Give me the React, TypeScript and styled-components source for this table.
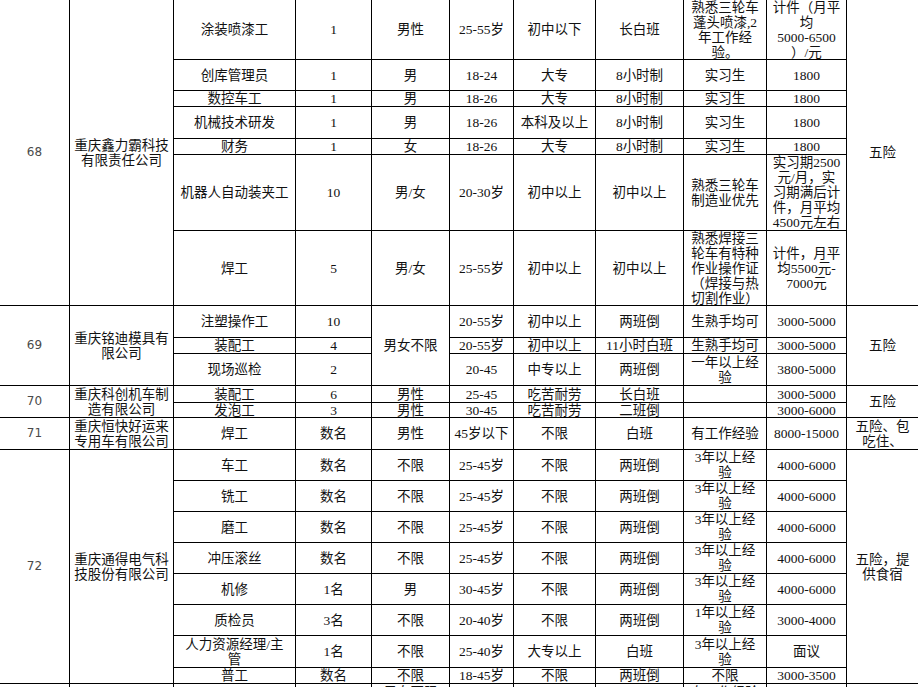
import styled, { createGlobalStyle } from 'styled-components'

const GlobalStyle = createGlobalStyle`
  html, body {
    margin: 0;
    padding: 0;
    background: #fff;
  }
  body {
    width: 918px;
    height: 687px;
    overflow: hidden;
  }
`

const Sheet = styled.div`
  display: grid;
  grid-template-columns: 69px 103px 121px 75px 77px 63px 81px 87px 82px 79px 71px;
  grid-template-rows:
    59px 30px 15px 31px 15px 75px 74px
    31px 15px 31px
    16px 14px
    31px
    30px 30px 30px 30px 30px 30px 31px 15px
    40px;
  gap: 1px;
  background: #000;
  width: 918px;
  font-family: "Liberation Serif", "Noto Sans CJK SC", serif;
  font-size: 13.5px;
  line-height: 15px;
  color: #111;
`

const Cell = styled.div<{ $r: number; $c: number; $rs?: number; $top?: boolean }>`
  grid-row: ${p => p.$r} / span ${p => p.$rs ?? 1};
  grid-column: ${p => p.$c};
  background: #fff;
  display: flex;
  align-items: ${p => (p.$top ? 'flex-start' : 'center')};
  justify-content: center;
  padding-top: ${p => (p.$top ? '1px' : '0')};
  text-align: center;
  white-space: nowrap;
  overflow: hidden;
`

const NumCell = styled(Cell)`
  font-family: "DejaVu Sans", "Liberation Sans", sans-serif;
  font-size: 12px;
  color: #4a4a4a;
`

type Company = {
  no: string
  name: string
  row: number
  span: number
  benefit: string
}

const companies: Company[] = [
  { no: '68', name: '重庆鑫力霸科技|有限责任公司', row: 1, span: 7, benefit: '五险' },
  { no: '69', name: '重庆铭迪模具有|限公司', row: 8, span: 3, benefit: '五险' },
  { no: '70', name: '重庆科创机车制|造有限公司', row: 11, span: 2, benefit: '五险' },
  { no: '71', name: '重庆恒快好运来|专用车有限公司', row: 13, span: 1, benefit: '五险、包|吃住、' },
  { no: '72', name: '重庆通得电气科|技股份有限公司', row: 14, span: 8, benefit: '五险，提|供食宿' },
]

// job columns 3..10, null = covered by a merged cell above
const jobs: (string | null)[][] = [
  ['涂装喷漆工', '1', '男性', '25-55岁', '初中以下', '长白班', '熟悉三轮车|蓬头喷漆,2|年工作经|验。', '计件（月平|均|5000-6500|）/元'],
  ['创库管理员', '1', '男', '18-24', '大专', '8小时制', '实习生', '1800'],
  ['数控车工', '1', '男', '18-26', '大专', '8小时制', '实习生', '1800'],
  ['机械技术研发', '1', '男', '18-26', '本科及以上', '8小时制', '实习生', '1800'],
  ['财务', '1', '女', '18-26', '大专', '8小时制', '实习生', '1800'],
  ['机器人自动装夹工', '10', '男/女', '20-30岁', '初中以上', '初中以上', '熟悉三轮车|制造业优先', '实习期2500|元/月，实|习期满后计|件，月平均|4500元左右'],
  ['焊工', '5', '男/女', '25-55岁', '初中以上', '初中以上', '熟悉焊接三|轮车有特种|作业操作证|（焊接与热|切割作业）', '计件，月平|均5500元-|7000元'],
  ['注塑操作工', '10', '男女不限', '20-55岁', '初中以上', '两班倒', '生熟手均可', '3000-5000'],
  ['装配工', '4', null, '20-55岁', '初中以上', '11小时白班', '生熟手均可', '3000-5000'],
  ['现场巡检', '2', null, '20-45', '中专以上', '两班倒', '一年以上经|验', '3800-5000'],
  ['装配工', '6', '男性', '25-45', '吃苦耐劳', '长白班', '', '3000-5000'],
  ['发泡工', '3', '男性', '30-45', '吃苦耐劳', '二班倒', '', '3000-6000'],
  ['焊工', '数名', '男性', '45岁以下', '不限', '白班', '有工作经验', '8000-15000'],
  ['车工', '数名', '不限', '25-45岁', '不限', '两班倒', '3年以上经|验', '4000-6000'],
  ['铣工', '数名', '不限', '25-45岁', '不限', '两班倒', '3年以上经|验', '4000-6000'],
  ['磨工', '数名', '不限', '25-45岁', '不限', '两班倒', '3年以上经|验', '4000-6000'],
  ['冲压滚丝', '数名', '不限', '25-45岁', '不限', '两班倒', '3年以上经|验', '4000-6000'],
  ['机修', '1名', '男', '30-45岁', '不限', '两班倒', '3年以上经|验', '4000-6000'],
  ['质检员', '3名', '不限', '20-40岁', '不限', '两班倒', '1年以上经|验', '3000-4000'],
  ['人力资源经理/主|管', '1名', '不限', '25-40岁', '大专以上', '白班', '3年以上经|验', '面议'],
  ['普工', '数名', '不限', '18-45岁', '不限', '两班倒', '不限', '3000-3500'],
]

// the cut-off row at the bottom edge
const lastRow = ['', '', '', '', '男女不限', '', '', '', '有工作经验', '', '']

function Lines({ text }: { text: string }) {
  const parts = text.split('|')
  return (
    <div>
      {parts.map((p, i) => (
        <div key={i}>{p || '\u00a0'}</div>
      ))}
    </div>
  )
}

export default function App() {
  return (
    <>
      <GlobalStyle />
      <Sheet>
        {companies.map(co => (
          <>
            <NumCell key={co.no + 'n'} $r={co.row} $c={1} $rs={co.span}>{co.no}</NumCell>
            <Cell key={co.no + 'c'} $r={co.row} $c={2} $rs={co.span}><Lines text={co.name} /></Cell>
            <Cell key={co.no + 'b'} $r={co.row} $c={11} $rs={co.span}><Lines text={co.benefit} /></Cell>
          </>
        ))}
        {jobs.map((vals, ri) =>
          vals.map((v, ci) =>
            v === null ? null : (
              <Cell
                key={ri + '-' + ci}
                $r={ri + 1}
                $c={ci + 3}
                $rs={v === '男女不限' ? 3 : 1}
              >
                {v && <Lines text={v} />}
              </Cell>
            )
          )
        )}
        {lastRow.map((v, ci) => (
          <Cell key={'last' + ci} $r={22} $c={ci + 1} $top>
            {v}
          </Cell>
        ))}
      </Sheet>
    </>
  )
}
